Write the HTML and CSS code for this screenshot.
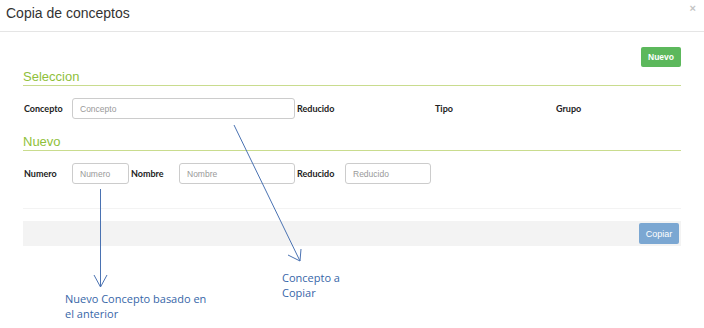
FILE: index.html
```html
<!DOCTYPE html>
<html lang="es">
<head>
<meta charset="UTF-8">
<title>Copia de conceptos</title>
<link rel="stylesheet" href="styles.css">
</head>
<body>
    <div class="modal">
        <div class="modal-header">
            <span class="title">Copia de conceptos</span>
            <span class="close">&times;</span>
        </div>

        <div class="modal-body">
            <div class="toolbar">
                <button class="btn btn-nuevo">Nuevo</button>
            </div>

            <!-- Concepto a copiar -->
            <div class="section">Seleccion</div>
            <div class="row">
                <label class="lbl">Concepto</label>
                <input class="field field-concepto" placeholder="Concepto">
                <label class="lbl lbl-wide">Reducido</label>
                <label class="lbl lbl-tipo">Tipo</label>
                <label class="lbl">Grupo</label>
            </div>

            <!-- Concepto nuevo -->
            <div class="section">Nuevo</div>
            <div class="row">
                <label class="lbl">Numero</label>
                <input class="field field-numero" placeholder="Numero">
                <label class="lbl">Nombre</label>
                <input class="field field-nombre" placeholder="Nombre">
                <label class="lbl">Reducido</label>
                <input class="field field-reducido" placeholder="Reducido">
            </div>

            <div class="divider"></div>

            <div class="modal-footer">
                <button class="btn btn-copiar">Copiar</button>
            </div>
        </div>
    </div>

    <!-- Notas -->
    <svg class="arrows" width="704" height="328" viewBox="0 0 704 328">
        <g stroke="#4a72b2" stroke-width="1" fill="none">
            <line x1="234" y1="125" x2="300" y2="261"/>
            <polyline points="288,255 300,261 301,249"/>
            <line x1="100.5" y1="189" x2="100.5" y2="287"/>
            <polyline points="94,275 100.5,287 107,275"/>
        </g>
    </svg>
    <div class="note note-nuevo">Nuevo Concepto basado en<br>el anterior</div>
    <div class="note note-copiar">Concepto a<br>Copiar</div>
</body>
</html>
```
FILE: styles.css
```css
body {
    margin: 0;
    background: white;
    font-family: "Liberation Sans", Arial, sans-serif;
    color: #333;
}

.modal {
    width: 704px;
}

.modal-header {
    height: 31px;
    border-bottom: 1px solid #e5e5e5;
    display: flex;
    justify-content: space-between;
    padding: 0 6px;
}

.title {
    font-size: 14px;
    line-height: 16px;
    margin-top: 5px;
}

.close {
    font-size: 11px;
    font-weight: bold;
    color: #c4c4c4;
    line-height: 12px;
    margin-top: 2px;
    margin-right: 2px;
}

.modal-body {
    padding: 15px 23px 0 23px;
}

.toolbar {
    display: flex;
    justify-content: flex-end;
}

.btn {
    border: none;
    border-radius: 2px;
    color: white;
    height: 20px;
    padding: 0;
    font-family: "Liberation Sans", Arial, sans-serif;
}

.btn-nuevo {
    width: 40px;
    background: #5cb85c;
    font-size: 8.5px;
    font-weight: bold;
}

.btn-copiar {
    width: 40px;
    height: 21px;
    background: #7ba7d2;
    font-size: 9px;
}

.section {
    margin-top: 2px;
    font-size: 13px;
    line-height: 16px;
    color: #8fbf3b;
    border-bottom: 1px solid #c9dc8e;
}

.section + .row {
    margin-top: 12px;
}

.row + .section {
    margin-top: 15px;
}

.row {
    display: flex;
    align-items: center;
    height: 21px;
    padding-left: 1px;
}

.lbl {
    font-family: Lato, "Liberation Sans", sans-serif;
    font-weight: bold;
    font-size: 9px;
    color: #222;
    width: 48px;
}

.lbl-wide {
    width: 138px;
}

.lbl-tipo {
    width: 121px;
}

.field {
    box-sizing: border-box;
    height: 21px;
    margin: 0 2px 0 0;
    padding: 0 7px;
    border: 1px solid #ccc;
    border-radius: 3px;
    font-family: "Liberation Sans", Arial, sans-serif;
    font-size: 8.5px;
    color: #555;
}

.field::placeholder {
    color: #999;
}

.field-concepto { width: 223px; }
.field-numero { width: 57px; }
.field-nombre { width: 116px; }
.field-reducido { width: 86px; }

.divider {
    margin-top: 24px;
    border-top: 1px solid #f3f3f3;
}

.modal-footer {
    margin-top: 12px;
    background: #f3f3f3;
    height: 25px;
    display: flex;
    justify-content: flex-end;
    align-items: center;
    padding-right: 2px;
}

/* Notas sobre la captura */
.arrows {
    position: absolute;
    top: 0;
    left: 0;
    pointer-events: none;
}

.note {
    position: absolute;
    font-family: "Open Sans", sans-serif;
    font-size: 11px;
    line-height: 15px;
    color: #3766a8;
}

.note-nuevo {
    top: 291px;
    left: 65px;
}

.note-copiar {
    top: 270px;
    left: 282px;
}
```
